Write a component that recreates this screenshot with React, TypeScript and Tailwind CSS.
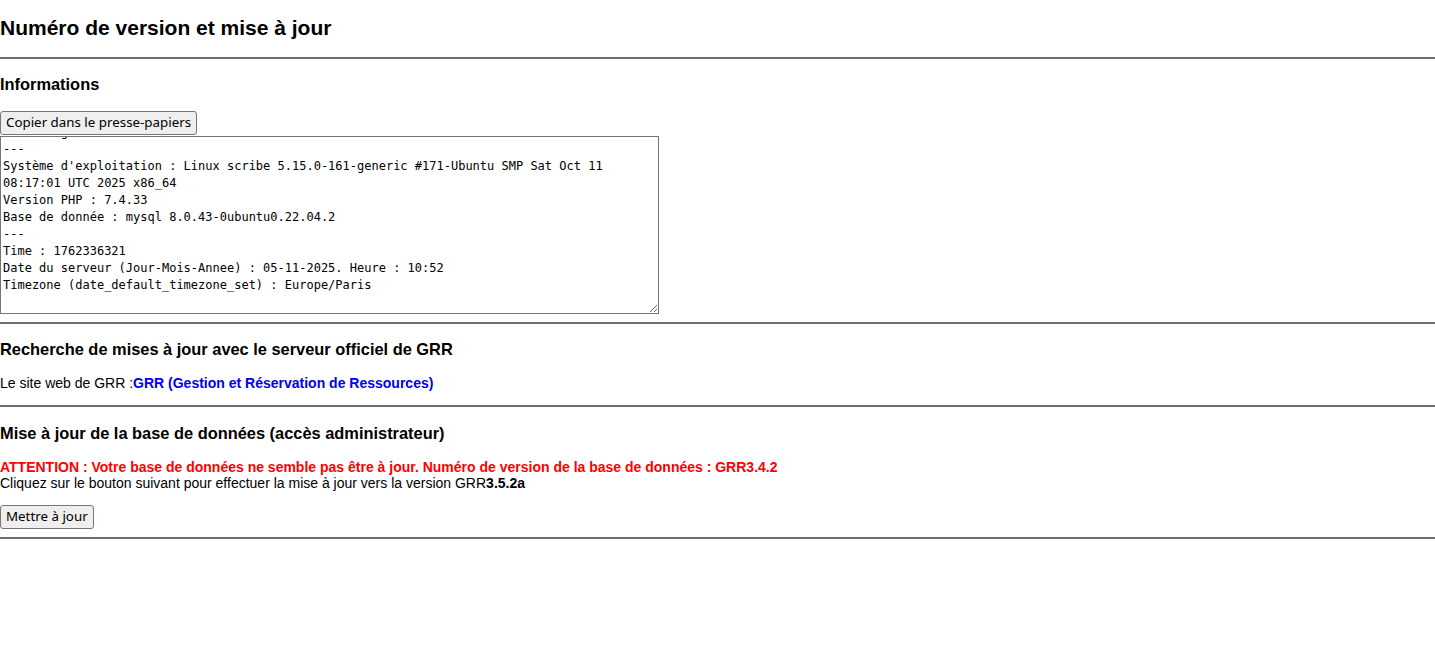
import React, { useEffect, useRef } from 'react';

const infoText = [
  'Version grr : 3.5.2a',
  '---',
  "Système d'exploitation : Linux scribe 5.15.0-161-generic #171-Ubuntu SMP Sat Oct 11 08:17:01 UTC 2025 x86_64",
  'Version PHP : 7.4.33',
  'Base de donnée : mysql 8.0.43-0ubuntu0.22.04.2',
  '---',
  'Time : 1762336321',
  'Date du serveur (Jour-Mois-Annee) : 05-11-2025. Heure : 10:52',
  'Timezone (date_default_timezone_set) : Europe/Paris',
  '',
].join('\n');

const Rule = () => <hr className="border-0 border-t-2 border-[#6e6e6e] w-full" />;

const btn =
  "bg-[#efefef] border border-[#767676] rounded-[3px] px-[5px] h-6 text-[13.33px] text-black font-['Noto_Sans',sans-serif] leading-none";

const App: React.FC = () => {
  const ref = useRef<HTMLTextAreaElement>(null);

  useEffect(() => {
    if (ref.current) ref.current.scrollTop = ref.current.scrollHeight;
  }, []);

  return (
    <div className="min-h-screen bg-white text-black font-['Liberation_Sans',Arial,sans-serif] text-[14px]">
      <h2 className="text-[21px] font-bold pt-[16px] pb-[17px] leading-6">Numéro de version et mise à jour</h2>
      <Rule />

      <h3 className="text-[16.4px] font-bold mt-[15px] leading-5">Informations</h3>
      <div className="mt-[17px] flex">
        <button className={btn}>Copier dans le presse-papiers</button>
      </div>
      <textarea
        ref={ref}
        readOnly
        defaultValue={infoText}
        className="block mt-px w-[659px] h-[178px] border border-[#767676] px-[2px] py-[2px] text-[12px] leading-[17px] font-['DejaVu_Sans_Mono',monospace] text-black resize"
      />
      <div className="mt-2">
        <Rule />
      </div>

      <h3 className="text-[16.4px] font-bold mt-[15px] leading-5">Recherche de mises à jour avec le serveur officiel de GRR</h3>
      <p className="mt-[16px] leading-4">
        Le site web de GRR :
        <a href="#" className="font-bold text-[#0000ee]">GRR (Gestion et Réservation de Ressources)</a>
      </p>
      <div className="mt-[14px]">
        <Rule />
      </div>

      <h3 className="text-[16.4px] font-bold mt-[16px] leading-5">Mise à jour de la base de données (accès administrateur)</h3>
      <p className="mt-[16px] leading-4 text-[#ff0000] font-bold">
        ATTENTION : Votre base de données ne semble pas être à jour. Numéro de version de la base de données : GRR3.4.2
      </p>
      <p className="leading-4">
        Cliquez sur le bouton suivant pour effectuer la mise à jour vers la version GRR<b>3.5.2a</b>
      </p>
      <div className="mt-[14px] flex">
        <button className={btn}>Mettre à jour</button>
      </div>
      <div className="mt-2">
        <Rule />
      </div>
    </div>
  );
};

export default App;
